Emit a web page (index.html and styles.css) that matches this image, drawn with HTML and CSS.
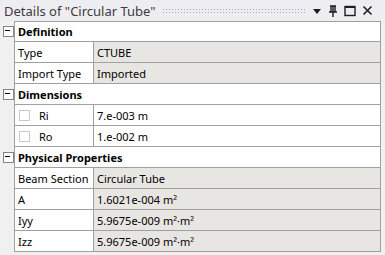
FILE: index.html
```html
<!DOCTYPE html>
<html lang="en">

<head>
    <meta charset="UTF-8" />
    <title>Details of "Circular Tube"</title>
    <link rel="stylesheet" href="styles.css">
</head>

<body>
    <div class="panel">
        <!-- Title bar -->
        <header class="title-bar">
            <span class="title-text">Details of "Circular Tube"</span>
            <span class="title-grip"></span>
            <span class="title-tools">
                <svg width="10" height="10" viewBox="0 0 10 10"><path d="M1 3h8L5 8z" fill="#1e1e1e"/></svg>
                <svg width="10" height="12" viewBox="0 0 10 12"><path d="M2 1h6M3 1v6M7 1v6M5 1v6M1 7h8M5 7v5" stroke="#1e1e1e" stroke-width="1.4" fill="none"/></svg>
                <svg width="12" height="12" viewBox="0 0 12 12"><rect x="1" y="1.5" width="10" height="9" stroke="#1e1e1e" stroke-width="1.4" fill="none"/><path d="M1 2h10" stroke="#1e1e1e" stroke-width="2"/></svg>
                <svg width="11" height="11" viewBox="0 0 11 11"><path d="M1.5 1.5l8 8M9.5 1.5l-8 8" stroke="#1e1e1e" stroke-width="1.6"/></svg>
            </span>
        </header>

        <!-- Property grid -->
        <div class="grid">
            <div class="row header first">
                <span class="toggle"></span>
                <div class="line"><span class="cell full">Definition</span></div>
            </div>
            <div class="row">
                <span class="gutter"></span>
                <div class="line"><span class="cell label">Type</span><span class="cell value ro">CTUBE</span></div>
            </div>
            <div class="row">
                <span class="gutter"></span>
                <div class="line"><span class="cell label">Import Type</span><span class="cell value ro">Imported</span></div>
            </div>

            <div class="row header">
                <span class="toggle"></span>
                <div class="line"><span class="cell full">Dimensions</span></div>
            </div>
            <div class="row">
                <span class="gutter"></span>
                <div class="line"><span class="cell label"><span class="check"></span>Ri</span><span class="cell value">7.e-003 m</span></div>
            </div>
            <div class="row">
                <span class="gutter"></span>
                <div class="line"><span class="cell label"><span class="check"></span>Ro</span><span class="cell value">1.e-002 m</span></div>
            </div>

            <div class="row header">
                <span class="toggle"></span>
                <div class="line"><span class="cell full">Physical Properties</span></div>
            </div>
            <div class="row">
                <span class="gutter"></span>
                <div class="line"><span class="cell label">Beam Section</span><span class="cell value ro">Circular Tube</span></div>
            </div>
            <div class="row">
                <span class="gutter"></span>
                <div class="line"><span class="cell label">A</span><span class="cell value ro">1.6021e-004 m²</span></div>
            </div>
            <div class="row">
                <span class="gutter"></span>
                <div class="line"><span class="cell label">Iyy</span><span class="cell value ro">5.9675e-009 m²·m²</span></div>
            </div>
            <div class="row">
                <span class="gutter"></span>
                <div class="line"><span class="cell label">Izz</span><span class="cell value ro">5.9675e-009 m²·m²</span></div>
            </div>
        </div>
    </div>
</body>

</html>
```

FILE: styles.css
```css
* {
    margin: 0;
    padding: 0;
    box-sizing: border-box;
}

html,
body {
    width: 100%;
    height: 100%;
    background-color: #f0f0f0;
    font-family: "Noto Sans", "Open Sans", sans-serif;
    font-size: 11px;
    color: #000;
    overflow: hidden;
}

.panel {
    display: flex;
    flex-direction: column;
    width: 385px;
}

/* Title bar */
.title-bar {
    display: flex;
    align-items: center;
    height: 21px;
    padding: 0 12px 0 4px;
    background-color: #eeeef2;
}

.title-text {
    font-size: 13px;
    color: #3c3c3c;
    white-space: nowrap;
}

.title-grip {
    flex: 1;
    height: 5px;
    margin: 0 6px;
    background-image: radial-gradient(#a8a8b0 0.6px, transparent 0.8px);
    background-size: 3px 3px;
}

.title-tools {
    display: flex;
    align-items: center;
    gap: 6px;
}

/* Property grid */
.grid {
    display: flex;
    flex-direction: column;
    padding-right: 4px;
}

.row {
    display: flex;
    height: 21px;
}

.gutter,
.toggle {
    width: 14px;
    flex-shrink: 0;
    position: relative;
}

/* minus box in front of a category */
.toggle::before {
    content: "";
    position: absolute;
    left: 3px;
    top: 5px;
    width: 9px;
    height: 9px;
    border: 1px solid #848484;
    background-color: #fff;
}

.toggle::after {
    content: "";
    position: absolute;
    left: 5px;
    top: 9px;
    width: 5px;
    height: 1px;
    background-color: #000;
}

.line {
    flex: 1;
    display: flex;
    border-left: 1px solid #a0a0a0;
    border-right: 1px solid #a0a0a0;
    border-bottom: 1px solid #a0a0a0;
    background-color: #fff;
}

.row.first .line {
    border-top: 1px solid #a0a0a0;
}

.cell {
    display: flex;
    align-items: center;
    padding-left: 3px;
    white-space: nowrap;
}

.full {
    flex: 1;
    font-weight: bold;
}

.label {
    width: 79px;
    flex-shrink: 0;
    border-right: 1px solid #a0a0a0;
}

.value {
    flex: 1;
}

.value.ro {
    background-color: #e8e6e3;
}

.check {
    width: 11px;
    height: 11px;
    border: 1px solid #c8c8c8;
    background-color: #fff;
    margin: 0 9px 0 1px;
}
```
